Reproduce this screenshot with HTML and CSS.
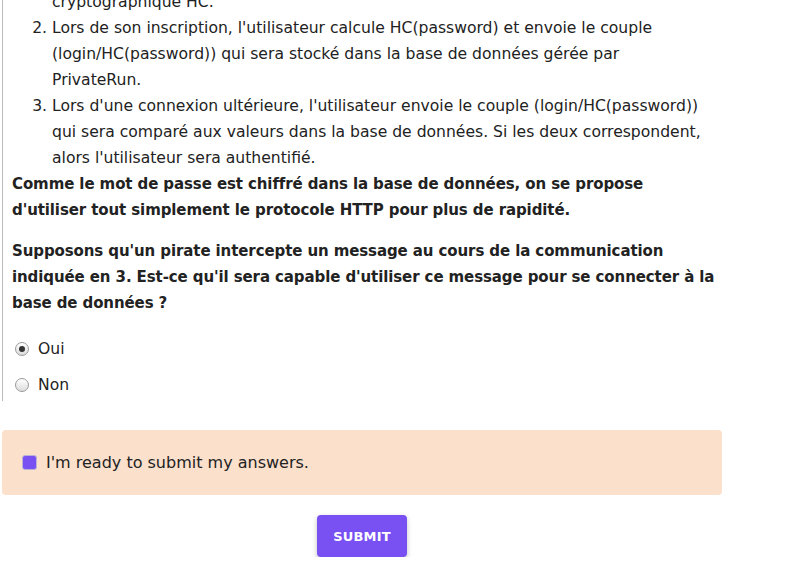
FILE: index.html
```html
<!DOCTYPE html>
<html lang="fr">
<head>
    <meta charset="UTF-8">
    <meta name="viewport" content="width=device-width, initial-scale=1.0">
    <title>Quiz - Authentification</title>
    <link rel="stylesheet" href="styles.css">
</head>
<body>

    <div class="quiz">
        <div class="question">
            <ol class="steps">
                <li class="first">Le service PrivateRun protège les mots de passe avec la fonction de hachage<br>cryptographique HC.</li>
                <li>Lors de son inscription, l'utilisateur calcule HC(password) et envoie le couple (login/HC(password)) qui sera stocké dans la base de données gérée par PrivateRun.</li>
                <li>Lors d'une connexion ultérieure, l'utilisateur envoie le couple (login/HC(password)) qui sera comparé aux valeurs dans la base de données. Si les deux correspondent, alors l'utilisateur sera authentifié.</li>
            </ol>
            <p class="statement">Comme le mot de passe est chiffré dans la base de données, on se propose d'utiliser tout simplement le protocole HTTP pour plus de rapidité.</p>
            <p class="statement">Supposons qu'un pirate intercepte un message au cours de la communication indiquée en 3. Est-ce qu'il sera capable d'utiliser ce message pour se connecter à la base de données ?</p>

            <div class="choices">
                <label class="choice">
                    <input type="radio" name="reponse" value="oui" checked>
                    <span>Oui</span>
                </label>
                <label class="choice">
                    <input type="radio" name="reponse" value="non">
                    <span>Non</span>
                </label>
            </div>
        </div>

        <div class="ready">
            <label class="ready-label">
                <input type="checkbox" id="ready" checked>
                <span>I'm ready to submit my answers.</span>
            </label>
        </div>

        <div class="actions">
            <button type="submit" class="submit">Submit</button>
        </div>
    </div>

</body>
</html>
```

FILE: styles.css
```css
body {
    margin: 0;
    font-family: "DejaVu Sans", sans-serif;
    font-size: 15.6px;
    color: #222;
    background: #fff;
}
.quiz {
    width: 720px;
    margin-left: 2px;
}
.question {
    border-left: 1px solid #bbb;
    padding-left: 9px;
}
.steps {
    margin: 0;
    padding: 0 12px 0 40px;
    line-height: 26px;
}
.steps .first {
    margin-top: -37px;
}
.statement {
    margin: 0 0 15px;
    font-size: 15px;
    font-weight: bold;
    letter-spacing: -0.1px;
    line-height: 26px;
}
.statement + .statement {
    margin-bottom: 0;
}
.choices {
    display: flex;
    flex-direction: column;
    gap: 4px;
    padding-top: 17px;
}
.choice {
    display: flex;
    align-items: center;
    gap: 9px;
    height: 32px;
    padding-left: 3px;
}
.choice input {
    appearance: none;
    width: 14px;
    height: 14px;
    margin: 0;
    border: 1px solid #9a9a9a;
    border-radius: 50%;
    background: linear-gradient(#fff, #dcdcdc);
    position: relative;
}
.choice input:checked::after {
    content: "";
    position: absolute;
    left: 3px;
    top: 3px;
    width: 6px;
    height: 6px;
    border-radius: 50%;
    background: #333;
}
.ready {
    margin-top: 29px;
    background-color: #fbe0cc;
    border-radius: 4px;
    padding: 0 20px;
    height: 65px;
    display: flex;
    align-items: center;
}
.ready-label {
    display: flex;
    align-items: center;
    gap: 9px;
    font-size: 16px;
}
.ready-label input {
    appearance: none;
    width: 15px;
    height: 15px;
    margin: 0;
    border: 1px solid #b9b3d6;
    border-radius: 3px;
    background: #fff;
}
.ready-label input:checked {
    background-color: #7950f2;
}
.actions {
    display: flex;
    justify-content: center;
    padding-top: 20px;
}
.submit {
    width: 90px;
    height: 42px;
    background-color: #7950f2;
    color: white;
    border: none;
    border-radius: 4px;
    font-family: "DejaVu Sans", sans-serif;
    font-weight: bold;
    font-size: 13px;
    text-transform: uppercase;
    letter-spacing: 0.2px;
    box-shadow: 0 2px 5px rgba(0, 0, 0, 0.25);
    cursor: pointer;
}
```
